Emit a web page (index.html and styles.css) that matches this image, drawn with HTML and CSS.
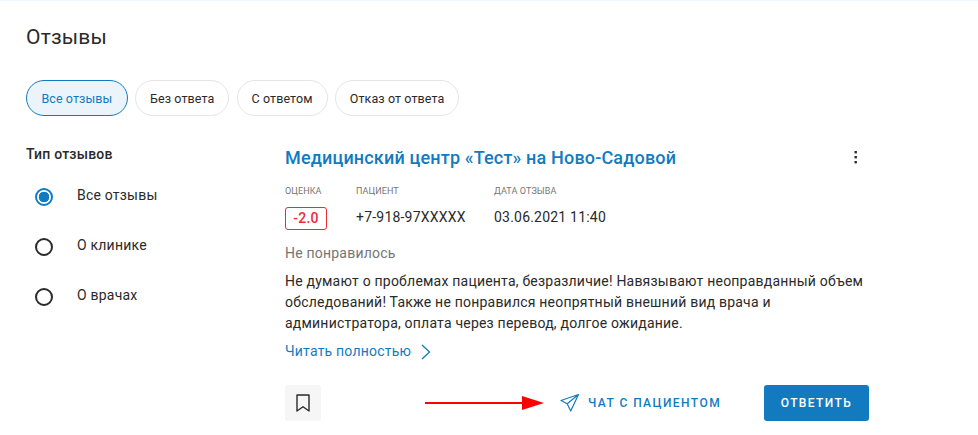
FILE: index.html
```html
<!DOCTYPE html>
<html lang="ru">
<head>
  <meta charset="UTF-8">
  <meta name="viewport" content="width=device-width, initial-scale=1.0">
  <title>Отзывы</title>
  <link rel="stylesheet" href="styles.css">
</head>
<body>
  <div class="container">
    <h1>Отзывы</h1>

    <div class="tabs">
      <button class="tab tab-active">Все отзывы</button>
      <button class="tab">Без ответа</button>
      <button class="tab">С ответом</button>
      <button class="tab">Отказ от ответа</button>
    </div>

    <div class="columns">
      <aside class="filter">
        <h3>Тип отзывов</h3>
        <div class="radio-row"><span class="radio radio-on"></span>Все отзывы</div>
        <div class="radio-row"><span class="radio"></span>О клинике</div>
        <div class="radio-row"><span class="radio"></span>О врачах</div>
      </aside>

      <section class="review">
        <div class="review-head">
          <h2>Медицинский центр «Тест» на Ново-Садовой</h2>
          <svg class="more-icon" width="4" height="14" viewBox="0 0 4 14">
            <rect x="0.5" y="1" width="2.4" height="2.4" fill="#2a2a2a"/>
            <rect x="0.5" y="6" width="2.4" height="2.4" fill="#2a2a2a"/>
            <rect x="0.5" y="11" width="2.4" height="2.4" fill="#2a2a2a"/>
          </svg>
        </div>

        <div class="meta">
          <div class="meta-item meta-score">
            <div class="meta-label">Оценка</div>
            <div class="score">-2.0</div>
          </div>
          <div class="meta-item meta-patient">
            <div class="meta-label">Пациент</div>
            <div class="meta-value">+7-918-97XXXXX</div>
          </div>
          <div class="meta-item">
            <div class="meta-label">Дата отзыва</div>
            <div class="meta-value">03.06.2021 11:40</div>
          </div>
        </div>

        <div class="verdict">Не понравилось</div>
        <p class="review-text">Не думают о проблемах пациента, безразличие! Навязывают неоправданный объем обследований! Также не понравился неопрятный внешний вид врача и администратора, оплата через перевод, долгое ожидание.</p>

        <a class="read-more" href="#">Читать полностью
          <svg width="10" height="16" viewBox="0 0 10 16" fill="none" stroke="#127bbf" stroke-width="1.3">
            <path d="M1 1l7.5 7L1 15"/>
          </svg>
        </a>

        <div class="actions">
          <button class="bookmark">
            <svg width="14" height="18" viewBox="0 0 14 18" fill="none" stroke="#2a2a2a" stroke-width="1.4" stroke-linejoin="round">
              <path d="M1 1h12v16l-6-4.2L1 17z"/>
            </svg>
          </button>
          <svg class="arrow" width="120" height="14" viewBox="0 0 120 14">
            <rect x="0" y="6" width="100" height="2" fill="#ff0000"/>
            <path d="M97 0l22 7-22 7z" fill="#ff0000"/>
          </svg>
          <button class="chat-btn">
            <svg width="20" height="20" viewBox="0 0 20 20" fill="none" stroke="#127bbf" stroke-width="1.2" stroke-linejoin="round">
              <path d="M18.5 1.5L1 7.5l6.2 3.3 3.5 7.2zM18.5 1.5L7.2 10.8"/>
            </svg>
            Чат с пациентом
          </button>
          <button class="reply-btn">Ответить</button>
        </div>
      </section>
    </div>
  </div>
</body>
</html>
```

FILE: styles.css
```css
body {
  font-family: 'Roboto', sans-serif;
  margin: 0;
  padding: 0;
  background-color: #ffffff;
  color: #2a2a2a;
  font-size: 14px;
  letter-spacing: 0.21px;
}

button {
  font-family: inherit;
  cursor: pointer;
}

.container {
  height: 435px;
  box-sizing: border-box;
  padding: 24px 26px 0;
  border-top: 1px solid #f1f6fa;
  overflow: hidden;
}

h1 {
  margin: 0;
  font-size: 21px;
  font-weight: 400;
  line-height: 24px;
}

.tabs {
  display: flex;
  gap: 7.2px;
  margin-top: 31px;
}

.tab {
  height: 36px;
  padding: 0 14px;
  background-color: #ffffff;
  border: 1px solid #e5e5e5;
  border-radius: 18px;
  color: #2a2a2a;
  font-size: 12.5px;
  letter-spacing: 0.1px;
}

.tab-active {
  padding: 0 14.4px;
  background-color: #eaf4fa;
  border-color: #127bbf;
  color: #127bbf;
}

.columns {
  display: flex;
  margin-top: 25px;
}

.filter {
  width: 259px;
  flex-shrink: 0;
}

.filter h3 {
  margin: 5px 0 0;
  font-size: 14px;
  font-weight: 500;
  line-height: 16px;
}

.radio-row {
  display: flex;
  align-items: center;
  height: 50px;
  padding-left: 9px;
  font-size: 14px;
}

.filter h3 + .radio-row {
  margin-top: 8px;
}

.radio {
  width: 14px;
  height: 14px;
  margin-top: 4px;
  margin-right: 24px;
  border: 2px solid #2a2a2a;
  border-radius: 50%;
  flex-shrink: 0;
}

.radio-on {
  border-color: #127bbf;
  background: radial-gradient(circle, #127bbf 0, #127bbf 5px, #ffffff 5.6px);
}

.review {
  width: 584px;
  padding-top: 4px;
}

.review-head {
  display: flex;
  align-items: center;
  justify-content: space-between;
  height: 24px;
  padding-right: 11px;
}

.review-head h2 {
  margin: 0;
  color: #127bbf;
  font-size: 18px;
  font-weight: 500;
  letter-spacing: 0.17px;
}

.meta {
  display: flex;
  margin-top: 17px;
}

.meta-score {
  width: 71px;
}

.meta-patient {
  width: 138px;
}

.meta-label {
  color: #757575;
  font-size: 9px;
  line-height: 11px;
  letter-spacing: 0.1px;
  text-transform: uppercase;
}

.meta-value {
  margin-top: 9px;
  font-size: 14px;
  line-height: 23px;
}

.score {
  width: 42px;
  height: 23px;
  margin-top: 10px;
  box-sizing: border-box;
  border: 1px solid #ee2a35;
  border-radius: 3px;
  color: #ee2a35;
  font-size: 14px;
  font-weight: 500;
  line-height: 21px;
  text-align: center;
}

.verdict {
  margin-top: 13px;
  color: #757575;
  font-size: 14px;
  line-height: 21px;
}

.review-text {
  margin: 7px 0 0;
  font-size: 14px;
  line-height: 21px;
}

.read-more {
  display: flex;
  align-items: center;
  gap: 10px;
  margin-top: 7px;
  color: #127bbf;
  font-size: 14px;
  line-height: 21px;
  text-decoration: none;
}

.actions {
  display: flex;
  align-items: center;
  margin-top: 23px;
}

.bookmark {
  display: flex;
  align-items: center;
  justify-content: center;
  width: 36px;
  height: 36px;
  padding: 0;
  background-color: #f6f6f6;
  border: none;
  border-radius: 3px;
}

.arrow {
  margin-left: 104px;
  flex-shrink: 0;
}

.chat-btn {
  display: flex;
  align-items: center;
  gap: 8px;
  margin-left: 15px;
  padding: 0;
  background: none;
  border: none;
  color: #127bbf;
  font-size: 12px;
  font-weight: 500;
  letter-spacing: 1.45px;
  text-transform: uppercase;
}

.reply-btn {
  width: 105px;
  height: 36px;
  margin-left: auto;
  padding: 0;
  background-color: #127bbf;
  border: none;
  border-radius: 3px;
  color: #ffffff;
  font-size: 12px;
  font-weight: 500;
  letter-spacing: 1.4px;
  text-transform: uppercase;
}
```
